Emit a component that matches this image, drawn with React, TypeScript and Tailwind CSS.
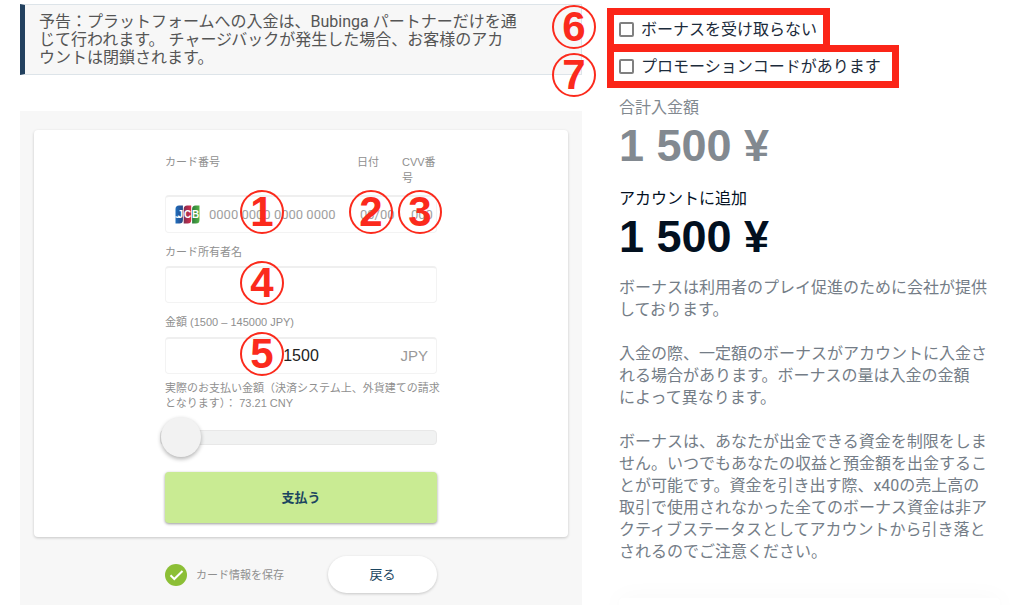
import { useState } from "react";
import type { ReactNode } from "react";

const fieldClass =
    "relative flex items-center rounded border border-[#f3f3f3] border-t-2 border-t-[#efefef] bg-white";
const labelClass = "text-[11px] leading-4 font-normal text-[#8f8f8f]";
const checkboxClass =
    "h-[15px] w-[15px] shrink-0 appearance-none rounded-[2px] border-2 border-[#808080] bg-white checked:bg-[#808080]";

function Mark({ children, className = "" }: { children: ReactNode; className?: string }) {
    return (
        <span
            className={`pointer-events-none flex h-11 w-11 items-center justify-center rounded-full border-2 border-[#fb2a1c] font-['Liberation_Sans',sans-serif] text-[42px] leading-none font-bold text-[#fb2a1c] ${className}`}
        >
            {children}
        </span>
    );
}

function JcbLogo() {
    return (
        <svg viewBox="0 0 25 19" className="h-[19px] w-[25px] shrink-0" role="img" aria-label="JCB">
            <defs>
                <linearGradient id="jcb-blue">
                    <stop offset="0" stopColor="#1f6fbe" />
                    <stop offset="1" stopColor="#2a4682" />
                </linearGradient>
                <linearGradient id="jcb-red">
                    <stop offset="0" stopColor="#7e3050" />
                    <stop offset="1" stopColor="#d92b4b" />
                </linearGradient>
                <linearGradient id="jcb-green">
                    <stop offset="0" stopColor="#2c7a3c" />
                    <stop offset="1" stopColor="#55b345" />
                </linearGradient>
            </defs>
            <path d="M4 0.5H7.9V15a3.5 3.5 0 0 1-3.5 3.5H0.5V4A3.5 3.5 0 0 1 4 0.5Z" fill="url(#jcb-blue)" />
            <path d="M12.2 0.5H16.2V15a3.5 3.5 0 0 1-3.5 3.5H8.7V4A3.5 3.5 0 0 1 12.2 0.5Z" fill="url(#jcb-red)" />
            <path d="M20.6 0.5H24.5V15a3.5 3.5 0 0 1-3.5 3.5H17.1V4A3.5 3.5 0 0 1 20.6 0.5Z" fill="url(#jcb-green)" />
            <path d="M0.5 11.6C2 12.4 4 12.4 5 11.4" fill="none" stroke="#fff" strokeWidth="1.3" />
            <g fill="#fff" fontFamily="Liberation Sans, sans-serif" fontSize="10" fontWeight="700">
                <text x="2.6" y="12.8">J</text>
                <text x="9" y="12.8">C</text>
                <text x="17" y="12.8">B</text>
            </g>
        </svg>
    );
}

function PaymentForm() {
    const [amount, setAmount] = useState("1500");

    return (
        <form
            className="flex-1 bg-[#f7f7f7] px-[14px] pt-[19px] pb-3 font-['Liberation_Sans','Noto_Sans_CJK_JP',sans-serif]"
            onSubmit={(e) => e.preventDefault()}
        >
            <div className="rounded bg-white pt-6 pb-[14px] shadow-[0_1px_3px_rgba(0,0,0,0.2)]">
                <div className="mx-auto w-[272px]">
                    {/* Card number, date, cvv */}
                    <div className="flex">
                        <label htmlFor="card" className={`flex-1 ${labelClass}`}>カード番号</label>
                        <label htmlFor="date" className={`w-[45px] ${labelClass}`}>日付</label>
                        <label htmlFor="cvv" className={`w-[35px] ${labelClass}`}>CVV番<br />号</label>
                    </div>
                    <div className={`mt-[9px] h-[38px] pl-[9px] font-[Roboto,sans-serif] text-[13px] ${fieldClass}`}>
                        <JcbLogo />
                        <input id="card" placeholder="0000 0000 0000 0000" className="ml-[9px] w-[151px] outline-none placeholder:text-[#a0a0a0]" />
                        <input id="date" placeholder="00/00" className="w-[51px] outline-none placeholder:text-[#a0a0a0]" />
                        <input id="cvv" placeholder="000" className="w-6 outline-none placeholder:text-[#a0a0a0]" />
                        <Mark className="absolute -top-[7px] left-[74px]">1</Mark>
                        <Mark className="absolute -top-[7px] left-[183px]">2</Mark>
                        <Mark className="absolute -top-[7px] left-[232px]">3</Mark>
                    </div>

                    <label htmlFor="owner" className={`mt-[11px] block ${labelClass}`}>カード所有者名</label>
                    <div className={`mt-[6px] h-[37px] ${fieldClass}`}>
                        <input id="owner" className="w-full px-3 text-base outline-none" />
                        <Mark className="absolute -top-[7px] left-[74px]">4</Mark>
                    </div>

                    <label htmlFor="amount" className={`mt-[11px] block ${labelClass}`}>金額 (1500 – 145000 JPY)</label>
                    <div className={`mt-[7px] h-[37px] ${fieldClass}`}>
                        <input
                            id="amount"
                            value={amount}
                            onChange={(e) => setAmount(e.target.value)}
                            className="w-full text-center text-base text-[#222222] outline-none"
                        />
                        <span className="absolute right-2 text-[15px] text-[#999999]">JPY</span>
                        <Mark className="absolute -top-[7px] left-[74px]">5</Mark>
                    </div>
                    <p className="mt-[7px] text-[11px] leading-[15px] whitespace-nowrap text-[#8f8f8f]">
                        実際のお支払い金額（決済システム上、外貨建ての請求
                        <br />
                        となります）： 73.21 CNY
                    </p>

                    <input
                        type="range"
                        aria-label="金額"
                        min={1500}
                        max={145000}
                        value={Number(amount) || 1500}
                        onChange={(e) => setAmount(e.target.value)}
                        className="mt-[6px] -ml-[5px] block h-10 w-[277px] appearance-none bg-transparent [&::-webkit-slider-runnable-track]:h-[15px] [&::-webkit-slider-runnable-track]:rounded [&::-webkit-slider-runnable-track]:border [&::-webkit-slider-runnable-track]:border-[#e8e8e8] [&::-webkit-slider-runnable-track]:bg-[#f1f2f2] [&::-webkit-slider-thumb]:-mt-[14px] [&::-webkit-slider-thumb]:h-10 [&::-webkit-slider-thumb]:w-10 [&::-webkit-slider-thumb]:appearance-none [&::-webkit-slider-thumb]:rounded-full [&::-webkit-slider-thumb]:bg-[#f2f2f2] [&::-webkit-slider-thumb]:shadow-[0_2px_4px_rgba(0,0,0,0.3)]"
                    />

                    <button
                        type="submit"
                        className="mt-[15px] h-[51px] w-full rounded bg-[#c9eb93] text-[13px] font-bold text-[#1b4560] shadow-[0_1px_3px_rgba(0,0,0,0.4)]"
                    >
                        支払う
                    </button>
                </div>
            </div>

            {/* Save card / back */}
            <div className="mx-auto mt-[19px] flex w-[272px] items-center justify-between">
                <label className={`relative flex items-center gap-[9px] ${labelClass}`}>
                    <input type="checkbox" defaultChecked className="h-[22px] w-[22px] appearance-none rounded-full bg-[#c4c4c4] checked:bg-[#8cbf36]" />
                    <svg viewBox="0 0 22 22" className="pointer-events-none absolute left-0 h-[22px] w-[22px]" aria-hidden="true">
                        <path d="M5.5 11.3 9.3 15 17.5 7" fill="none" stroke="#fff" strokeWidth="2" />
                    </svg>
                    カード情報を保存
                </label>
                <button type="button" className="h-[37px] w-[109px] rounded-full bg-white text-[13px] text-[#1b4560] shadow-[0_1px_3px_rgba(0,0,0,0.2)]">
                    戻る
                </button>
            </div>
        </form>
    );
}

function Amount({ title, muted = false }: { title: string; muted?: boolean }) {
    return (
        <div className={muted ? "text-[#828990]" : "text-[#02101f]"}>
            <div className="text-base leading-6">{title}</div>
            <div className="font-['Liberation_Sans',sans-serif] text-[45px] leading-[52px] font-bold">1 500 ¥</div>
        </div>
    );
}

export default function App() {
    return (
        <main className="grid min-h-screen grid-cols-[562fr_381fr] gap-[37px] overflow-hidden bg-white pr-6 pl-5 font-[Roboto,'Noto_Sans_CJK_JP',sans-serif]" lang="ja">
            <section className="flex min-w-0 flex-col pt-1">
                <div className="mb-9 border border-l-[5px] border-[#dde4e9] border-l-[#23415f] bg-[#f7f7f7] pt-2 pb-[7px] pl-[14px] text-base leading-[18px] text-[#555555]">
                    予告：プラットフォームへの入金は、Bubinga パートナーだけを通
                    <br />
                    じて行われます。 チャージバックが発生した場合、お客様のアカ
                    <br />
                    ウントは閉鎖されます。
                </div>
                <PaymentForm />
            </section>

            <aside className="flex min-w-0 flex-col pt-2">
                <div className="relative -ml-3 flex flex-col items-start text-base text-[#1c2b3b]">
                    <label className="flex h-[43px] items-center gap-[7px] border-[7px] border-[#fb2518] pr-[6px] pl-[5px]">
                        <input type="checkbox" className={checkboxClass} />
                        ボーナスを受け取らない
                    </label>
                    <label className="-mt-[6px] flex h-[43px] items-center gap-[7px] border-[7px] border-[#fb2518] pr-[11px] pl-[5px]">
                        <input type="checkbox" className={checkboxClass} />
                        プロモーションコードがあります
                    </label>
                    <div className="absolute -top-[3px] -left-[55px] flex flex-col gap-1">
                        <Mark>6</Mark>
                        <Mark>7</Mark>
                    </div>
                </div>

                <div className="mt-2 flex flex-col gap-[15px]">
                    <Amount title="合計入金額" muted />
                    <Amount title="アカウントに追加" />
                </div>

                <div className="mt-[14px] space-y-[22px] text-base leading-[22px] whitespace-nowrap text-[#747d87]">
                    <p>
                        ボーナスは利用者のプレイ促進のために会社が提供
                        <br />
                        しております。
                    </p>
                    <p>
                        入金の際、一定額のボーナスがアカウントに入金さ
                        <br />
                        れる場合があります。ボーナスの量は入金の金額
                        <br />
                        によって異なります。
                    </p>
                    <p>
                        ボーナスは、あなたが出金できる資金を制限をしま
                        <br />
                        せん。いつでもあなたの収益と預金額を出金するこ
                        <br />
                        とが可能です。資金を引き出す際、x40の売上高の
                        <br />
                        取引で使用されなかった全てのボーナス資金は非ア
                        <br />
                        クティブステータスとしてアカウントから引き落と
                        <br />
                        されるのでご注意ください。
                    </p>
                </div>

                <div className="mt-[35px] flex-1 rounded-t bg-white shadow-[0_4px_24px_rgba(0,0,0,0.08)]" />
            </aside>
        </main>
    );
}
